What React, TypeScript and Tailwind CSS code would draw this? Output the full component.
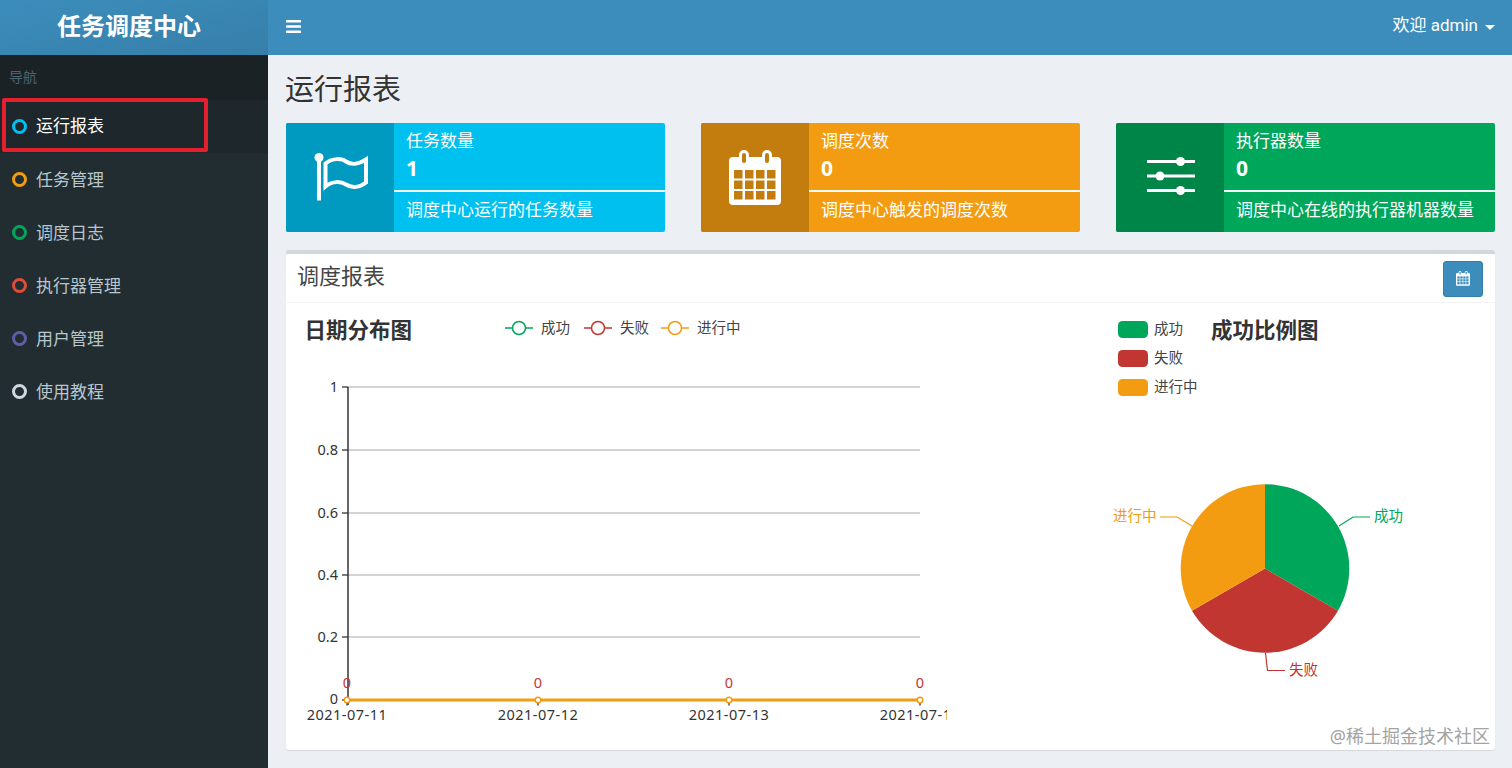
import React from 'react';

const menus = [
  { label: '运行报表', color: 'border-[#00c0ef]', active: true },
  { label: '任务管理', color: 'border-[#f39c12]' },
  { label: '调度日志', color: 'border-[#00a65a]' },
  { label: '执行器管理', color: 'border-[#dd4b39]' },
  { label: '用户管理', color: 'border-[#605ca8]' },
  { label: '使用教程', color: 'border-[#d2d6de]' },
];

const FlagIcon = () => (
  <svg viewBox="309 149.500 62 56" className="w-[62px] h-[56px]" fill="none">
    <circle cx="319" cy="157" r="4.500" fill="#fff" />
    <path d="M319 158V200" stroke="#fff" strokeWidth="4" />
    <path
      d="M325.500 163C333 157 342 158 346 161C352 165 360 163 366 159V182C360 187 352 188 346 184C341 181 333 180 325.500 186Z"
      stroke="#fff"
      strokeWidth="4"
    />
  </svg>
);

const CalendarIcon = ({ hole, size }: { hole: string; size: number }) => (
  <svg viewBox="0 0 52 55" width={size} height={(size * 55) / 52}>
    <rect x="0" y="7" width="52" height="48" rx="4" fill="#fff" />
    {[5, 16, 27, 38].map((x) =>
      [20, 30.500, 41].map((y) => <rect key={`${x}-${y}`} x={x} y={y} width="8.500" height="8.500" fill={hole} />)
    )}
    {[10, 33].map((x) => (
      <g key={x}>
        <rect x={x} y="0" width="10" height="16" rx="5" fill="#fff" />
        <rect x={x + 3} y="3" width="4" height="10" rx="2" fill={hole} />
      </g>
    ))}
  </svg>
);

const SlidersIcon = () => (
  <svg viewBox="1144 153.500 52 48" className="w-[52px] h-[48px]" fill="#fff">
    <rect x="1147" y="159.500" width="48" height="3" />
    <rect x="1147" y="174" width="48" height="3" />
    <rect x="1147" y="188.500" width="48" height="3" />
    <circle cx="1180.500" cy="161" r="4.500" />
    <circle cx="1160" cy="175.500" r="4.500" />
    <circle cx="1180.500" cy="190" r="4.500" />
  </svg>
);

const cards = [
  {
    title: '任务数量',
    value: '1',
    desc: '调度中心运行的任务数量',
    bg: 'bg-[#00c0ef]',
    iconBg: 'bg-[#009ac0]',
    icon: <FlagIcon />,
  },
  {
    title: '调度次数',
    value: '0',
    desc: '调度中心触发的调度次数',
    bg: 'bg-[#f39c12]',
    iconBg: 'bg-[#c27d0e]',
    icon: <CalendarIcon hole="#c27d0e" size={52} />,
  },
  {
    title: '执行器数量',
    value: '0',
    desc: '调度中心在线的执行器机器数量',
    bg: 'bg-[#00a65a]',
    iconBg: 'bg-[#008548]',
    icon: <SlidersIcon />,
  },
];

const LineChart = () => {
  const grid = [
    { y: 387, label: '1' },
    { y: 450, label: '0.8' },
    { y: 513, label: '0.6' },
    { y: 575, label: '0.4' },
    { y: 637, label: '0.2' },
  ];
  const points = [
    { x: 347, label: '2021-07-11' },
    { x: 538, label: '2021-07-12' },
    { x: 729, label: '2021-07-13' },
    { x: 920, label: '2021-07-14' },
  ];
  const legend = [
    { x: 505, color: '#00a65a', label: '成功' },
    { x: 584, color: '#c23632', label: '失败' },
    { x: 661, color: '#f39c12', label: '进行中' },
  ];
  return (
    <svg viewBox="298 304 649 446" className="w-[649px] h-[446px] shrink-0">
      <text x="304.500" y="338" fontSize="21.500" fontWeight="700" fill="#333">
        日期分布图
      </text>
      {legend.map((l) => (
        <g key={l.label}>
          <path d={`M${l.x} 328h28`} stroke={l.color} strokeWidth="1.500" />
          <circle cx={l.x + 14} cy="328" r="6.500" fill="#fff" stroke={l.color} strokeWidth="1.500" />
          <text x={l.x + 36} y="333" fontSize="14.500" fill="#444">
            {l.label}
          </text>
        </g>
      ))}
      {grid.map((g) => (
        <g key={g.y}>
          <path d={`M348 ${g.y}H920`} stroke="#c4c4c4" strokeWidth="1.300" />
          <path d={`M342 ${g.y}H348`} stroke="#333" strokeWidth="1.300" />
          <text x="338" y={g.y + 5} fontSize="14.500" fill="#333" textAnchor="end">
            {g.label}
          </text>
        </g>
      ))}
      <path d="M342 700H348" stroke="#333" strokeWidth="1.300" />
      <text x="338" y="704" fontSize="14.500" fill="#333" textAnchor="end">
        0
      </text>
      <path d="M348 387V705" stroke="#333" strokeWidth="1.500" />
      <path d="M347 700H920" stroke="#f39c12" strokeWidth="3" />
      {points.map((p) => (
        <g key={p.x}>
          <path d={`M${p.x} 700v5.500`} stroke="#333" strokeWidth="1.300" />
          <circle cx={p.x} cy="700" r="2.800" fill="#fff" stroke="#f39c12" strokeWidth="1.500" />
          <text x={p.x} y="688" fontSize="14.500" fill="#c23632" textAnchor="middle">
            0
          </text>
          <text x={p.x} y="720" fontSize="14.500" letterSpacing="0.5" fill="#333" textAnchor="middle">
            {p.label}
          </text>
        </g>
      ))}
    </svg>
  );
};

const PieChart = () => {
  const legend = [
    { y: 321, color: '#00a65a', label: '成功' },
    { y: 350, color: '#c23632', label: '失败' },
    { y: 379, color: '#f39c12', label: '进行中' },
  ];
  return (
    <svg viewBox="1090 304 393 446" className="w-[393px] h-[446px] shrink-0">
      {legend.map((l) => (
        <g key={l.label}>
          <rect x="1118" y={l.y} width="30" height="17" rx="4.500" fill={l.color} />
          <text x="1154" y={l.y + 13} fontSize="14.500" fill="#444">
            {l.label}
          </text>
        </g>
      ))}
      <text x="1211" y="338" fontSize="21.500" fontWeight="700" fill="#333">
        成功比例图
      </text>
      <path d="M1265 568.500V484.200A84.300 84.300 0 0 1 1338 610.650Z" fill="#00a65a" />
      <path d="M1265 568.500L1338 610.650A84.300 84.300 0 0 1 1192 610.650Z" fill="#c23632" />
      <path d="M1265 568.500L1192 610.650A84.300 84.300 0 0 1 1265 484.200Z" fill="#f39c12" />
      <path d="M1339 526L1353 517H1370" stroke="#00a65a" fill="none" strokeWidth="1.200" />
      <path d="M1265.500 653L1267.500 670.500H1285" stroke="#c23632" fill="none" strokeWidth="1.200" />
      <path d="M1192 526L1177 517H1160" stroke="#f39c12" fill="none" strokeWidth="1.200" />
      <text x="1374" y="521" fontSize="14.500" fill="#00a65a">
        成功
      </text>
      <text x="1289" y="675" fontSize="14.500" fill="#c23632">
        失败
      </text>
      <text x="1113" y="521" fontSize="14.500" fill="#f39c12">
        进行中
      </text>
    </svg>
  );
};

const App: React.FC = () => {
  return (
    <div className="flex h-[768px] w-[1512px] overflow-hidden bg-[#ecf0f5] font-['Noto_Sans','Noto_Sans_CJK_SC',sans-serif]">
      {/* Sidebar */}
      <aside className="w-[268px] shrink-0 bg-[#222d32] flex flex-col">
        <div className="h-[55px] bg-gradient-to-br from-[#3c8dbc] to-[#367fa9] flex items-center justify-center pr-[10px] pb-[4px] text-white text-[24px] font-bold">
          任务调度中心
        </div>
        <div className="h-[45px] bg-[#1a2226] pl-[9px] pt-[12px] text-[14px] leading-[20px] text-[#4b646f]">导航</div>
        <nav className="relative">
          {menus.map((m) => (
            <div
              key={m.label}
              className={`h-[53px] flex items-center pl-[12px] text-[17px] ${
                m.active ? 'bg-[#1e282c] text-white' : 'text-[#b8c7ce]'
              }`}
            >
              <span className={`w-[15px] h-[15px] rounded-full border-[3px] ${m.color}`} />
              <span className={`ml-[9px] ${m.active ? 'mb-[1px]' : ''}`}>{m.label}</span>
            </div>
          ))}
          <div className="absolute left-[2px] top-[-2px] w-[206px] h-[54px] border-[4px] border-[#e3202e] rounded-[2px]" />
        </nav>
      </aside>

      <div className="flex-1 flex flex-col min-w-0">
        {/* Top bar */}
        <header className="h-[55px] shrink-0 bg-[#3c8dbc] flex items-center justify-between pl-[18px] pr-[17px] text-white">
          <svg viewBox="0 0 15 13" className="w-[15px] h-[13px] mb-[3px]" fill="#fff">
            <rect x="0" y="0" width="15" height="2.600" rx="0.600" />
            <rect x="0" y="5.200" width="15" height="2.600" rx="0.600" />
            <rect x="0" y="10.400" width="15" height="2.600" rx="0.600" />
          </svg>
          <div className="flex items-center text-[17px] pb-[4px]">
            <span className="font-['Roboto','Noto_Sans_CJK_SC',sans-serif]">欢迎 admin</span>
            <span className="ml-[7px] mt-[3px] w-0 h-0 border-x-[5px] border-x-transparent border-t-[5px] border-t-white" />
          </div>
        </header>

        <main className="flex-1 pl-[18px] pr-[17px]">
          <h1 className="text-[29px] leading-[40px] mt-[14px] -ml-[1px] text-[#333]">运行报表</h1>

          {/* Stat cards */}
          <div className="grid grid-cols-3 gap-[36px] mt-[14px]">
            {cards.map((c) => (
              <div key={c.title} className={`flex h-[109px] rounded-[2px] overflow-hidden text-white ${c.bg}`}>
                <div className={`w-[108px] shrink-0 flex items-center justify-center ${c.iconBg}`}>{c.icon}</div>
                <div className="flex-1 min-w-0">
                  <div className="h-[67px] pl-[12px] pt-[5px]">
                    <div className="text-[17px] leading-[26px]">{c.title}</div>
                    <div className="text-[21px] leading-[28px] font-bold">{c.value}</div>
                  </div>
                  <div className="h-[2px] bg-white/95" />
                  <div className="pl-[12px] text-[17px] leading-[36px]">{c.desc}</div>
                </div>
              </div>
            ))}
          </div>

          {/* Report box */}
          <section className="relative mt-[18px] h-[500px] bg-white rounded-[3px] border-t-[4px] border-[#d2d6de] shadow-[0_1px_1px_rgba(0,0,0,0.1)]">
            <div className="h-[49px] border-b border-[#f4f4f4] flex items-center justify-between px-[12px]">
              <h3 className="text-[22px] text-[#444] -ml-[1px] mb-[5px]">调度报表</h3>
              <button className="w-[40px] h-[36px] mt-[1px] bg-[#3c8dbc] border border-[#367fa9] rounded-[3px] flex items-center justify-center">
                <CalendarIcon hole="#3c8dbc" size={14} />
              </button>
            </div>
            <div className="flex justify-between px-[12px] mt-[1px]">
              <LineChart />
              <PieChart />
            </div>
            <div className="absolute right-[5px] bottom-[1px] text-[18px] leading-[26px] text-[#a3a3a3] [text-shadow:0_0_2px_#fff]">
              @稀土掘金技术社区
            </div>
          </section>
        </main>
      </div>
    </div>
  );
};

export default App;
